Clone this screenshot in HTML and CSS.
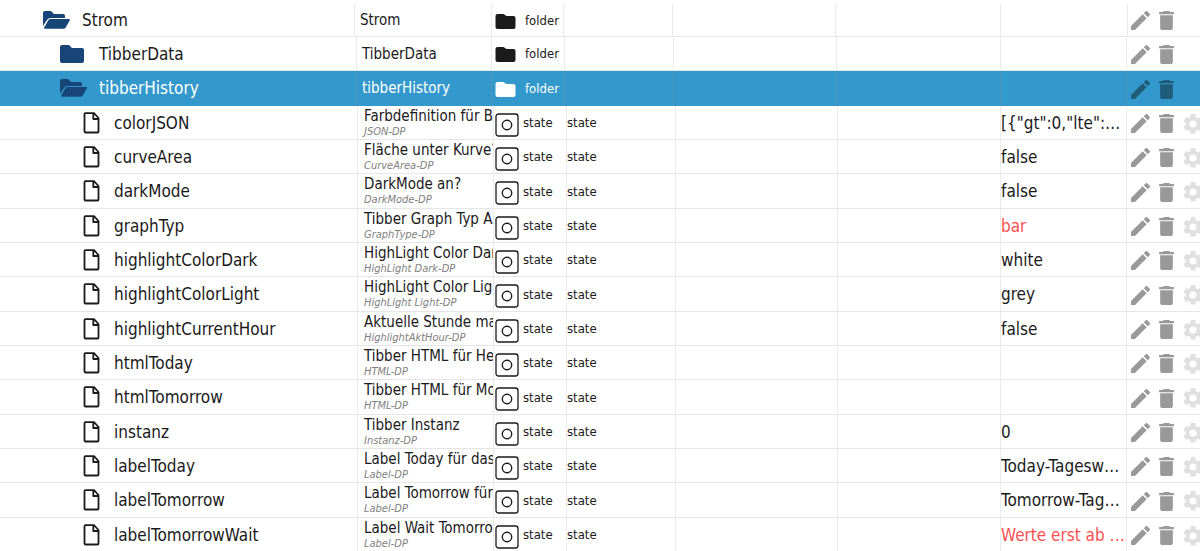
FILE: index.html
```html
<!DOCTYPE html>
<html lang="de">
<head>
<meta charset="utf-8">
<meta name="viewport" content="width=device-width, initial-scale=1">
<title>Objekte</title>
<link rel="stylesheet" href="styles.css">
</head>
<body>
<svg class="sprite" aria-hidden="true">
<symbol id="open" viewBox="0 0 27 20"><path d="M0 16V3q0-2 2-2h6l3 3h9q2 0 2 2v2H8q-3 0-4 2z"/><path d="M8 9h18q1.400 0 .7 1.400l-4 7q-.8 1.300-2.300 1.300H2q-1.500 0-.8-1.300l4-7Q6 9 8 9z"/></symbol>
<symbol id="closed" viewBox="0 0 24 20"><path d="M2 1h7l3 3h10q2 0 2 2v11q0 2-2 2H2q-2 0-2-2V3q0-2 2-2z"/></symbol>
<symbol id="kind" viewBox="0 0 20 16"><path d="M2 0h6l3 2h7q2 0 2 2v9q0 2-2 2H2q-2 0-2-2V2q0-2 2-2z"/></symbol>
<symbol id="file" viewBox="0 0 16 22"><path d="M2 1.200h8.500L15 6v13.500q0 1-1 1H2q-1 0-1-1v-17.300q0-1 1-1zM9.800 1.500V7H15" fill="none" stroke="currentColor" stroke-width="1.800" stroke-linejoin="round"/></symbol>
<symbol id="state" viewBox="0 0 24 24"><rect x="1" y="1" width="22" height="22" rx="2.500" fill="none" stroke="currentColor" stroke-width="1.300"/><circle cx="12" cy="12" r="4.700" fill="none" stroke="currentColor" stroke-width="1.400"/></symbol>
<symbol id="edit" viewBox="3 3 18 18"><path d="M3 17.250V21h3.750L17.810 9.940l-3.750-3.750L3 17.250zM20.710 7.040a1 1 0 0 0 0-1.410l-2.340-2.340a1 1 0 0 0-1.410 0l-1.830 1.830 3.750 3.750 1.830-1.830z"/></symbol>
<symbol id="trash" viewBox="5 3 14 18"><path d="M6 19c0 1.100.9 2 2 2h8c1.100 0 2-.9 2-2V7H6v12zM19 4h-3.500l-1-1h-5l-1 1H5v2h14V4z"/></symbol>
<symbol id="gear" viewBox="2 2 20 20"><path d="M19.140 12.940c.04-.3.060-.61.060-.94s-.02-.64-.07-.94l2.030-1.580c.18-.14.230-.41.120-.61l-1.920-3.320c-.12-.22-.37-.29-.59-.22l-2.390.96c-.5-.38-1.030-.7-1.620-.94l-.36-2.540A.48.48 0 0 0 13.920 2h-3.840c-.24 0-.43.170-.47.410l-.36 2.540c-.59.240-1.130.570-1.620.94l-2.390-.96c-.22-.08-.47 0-.59.220L2.740 8.870c-.12.210-.08.470.12.610l2.030 1.580c-.05.3-.09.630-.09.940s.02.640.07.940l-2.030 1.580c-.18.140-.23.410-.12.610l1.920 3.320c.12.220.37.290.59.220l2.390-.96c.5.380 1.030.7 1.620.94l.36 2.540c.05.240.24.410.48.410h3.840c.24 0 .44-.17.470-.41l.36-2.540c.59-.24 1.130-.56 1.620-.94l2.390.96c.22.080.47 0 .59-.22l1.920-3.320c.12-.22.070-.47-.12-.61l-2.010-1.580zM12 15.600a3.600 3.600 0 1 1 0-7.200 3.600 3.600 0 0 1 0 7.200z"/></symbol>
</svg>
<table class="objects" aria-label="Objekte"><tbody id="rows"></tbody></table>
<script src="rows.js"></script>
</body>
</html>
```
FILE: styles.css
```css
* { box-sizing: border-box; }
body { margin: 0; background: #fff; color: #1a1a1a; font-family: "DejaVu Sans Condensed", "Noto Sans", sans-serif; overflow: hidden; }
.sprite { display: none; }
svg { display: block; flex: none; fill: currentColor; }
.objects, .objects tbody { display: block; width: 100%; }
.row { display: grid; min-height: 34px; border-bottom: 1px solid #e6e6e6; }
.row:nth-child(3n) { min-height: 35px; }
.root { min-height: 37px; padding-top: 4px; grid-template-columns: 1fr 137px 72px 109px 163px 165px 127px 72px; }
.branch { grid-template-columns: 1fr 135px 73px 109px 163px 164px 126px 73px; }
.leaf { grid-template-columns: 1fr 136px 73px 109px 162px 163px 126px 73px; }
.row td { display: flex; align-items: center; min-width: 0; padding: 0; overflow: hidden; white-space: nowrap; border-right: 1px solid #ebebeb; }
.row td.actions { border: 0; gap: 9px; padding: 2px 0 0 4px; }
.root td.actions { padding: 0 0 0 3px; }
.row td.tree { gap: 15px; font-size: 17px; }
.root .tree { padding-left: 43px; padding-bottom: 1px; }
.branch .tree { padding-left: 60px; }
.leaf .tree { padding-left: 83px; }
.row.root .tree, .row.branch .tree { gap: 12px; }
.folder { width: 27px; height: 20px; color: #174577; }
.folder.closed { width: 24px; margin-right: 3px; }
.file { width: 17px; height: 22px; margin-right: -1px; }
.row td.title { display: flex; flex-direction: column; justify-content: center; align-items: flex-start; padding-left: 5px; font-size: 15px; line-height: 18px; }
.leaf td.title { padding-left: 6px; line-height: 17px; }
.desc { color: #808080; font-size: 11px; line-height: 13px; font-style: italic; }
.type, .role { font-size: 13px; }
.type { gap: 9px; }
.kind { width: 21px; height: 16px; margin: 3px 0 0 3px; }
.state { width: 24px; height: 24px; margin: 4px 0 0 1px; }
.leaf .type { gap: 4px; }
.row td.value { display: block; padding-top: 1px; font-size: 17px; line-height: 32px; text-overflow: ellipsis; }
.unconfirmed { color: #ff5050; }
.selected { background: #3399cc; border-color: #3399cc; color: #fff; }
.selected td { border-color: #4c96bb; }
.actions button { flex: none; padding: 0; border: 0; background: none; color: #999; }
.selected .actions button { color: #1f5c7a; }
.actions svg { width: 20px; height: 20px; }
.actions .edit { width: 19px; height: 19px; }
.actions .trash { width: 15px; height: 19px; }
.actions button:disabled { color: #e0e0e0; }
```
FILE: rows.js
```js
const items = [
  ["root", "Strom", "Strom"],
  ["branch", "TibberData", "TibberData"],
  ["branch selected", "tibberHistory", "tibberHistory"],
  ["leaf", "colorJSON", "Farbdefinition für Balken", "JSON-DP", '[{"gt":0,"lte":10,"color":"green"}]'],
  ["leaf", "curveArea", "Fläche unter Kurve?", "CurveArea-DP", "false"],
  ["leaf", "darkMode", "DarkMode an?", "DarkMode-DP", "false"],
  ["leaf", "graphTyp", "Tibber Graph Typ Auswahl", "GraphType-DP", "bar", true],
  ["leaf", "highlightColorDark", "HighLight Color Dark", "HighLight Dark-DP", "white"],
  ["leaf", "highlightColorLight", "HighLight Color Light", "HighLight Light-DP", "grey"],
  ["leaf", "highlightCurrentHour", "Aktuelle Stunde markieren", "HighlightAktHour-DP", "false"],
  ["leaf", "htmlToday", "Tibber HTML für Heute", "HTML-DP", ""],
  ["leaf", "htmlTomorrow", "Tibber HTML für Morgen", "HTML-DP", ""],
  ["leaf", "instanz", "Tibber Instanz", "Instanz-DP", "0"],
  ["leaf", "labelToday", "Label Today für das Diagramm", "Label-DP", "Today-Tageswerte"],
  ["leaf", "labelTomorrow", "Label Tomorrow für Diagramm", "Label-DP", "Tomorrow-Tageswerte"],
  ["leaf", "labelTomorrowWait", "Label Wait Tomorrow", "Label-DP", "Werte erst ab 13 Uhr", true]
];
const icon = (id, cls) => `<svg class="${cls}" aria-hidden="true"><use href="#${id}"/></svg>`;
document.getElementById("rows").innerHTML = items.map(([kind, name, title, desc, value = "", unconfirmed]) => {
  const leaf = kind === "leaf";
  const treeIcon = leaf ? icon("file", "file") : name === "TibberData" ? icon("closed", "folder closed") : icon("open", "folder");
  return `<tr class="row ${kind}">
    <td class="tree">${treeIcon}<span>${name}</span></td>
    <td class="title"><span>${title}</span>${leaf ? `<span class="desc">${desc}</span>` : ""}</td>
    <td class="type">${leaf ? icon("state", "state") : icon("kind", "kind")}<span>${leaf ? "state" : "folder"}</span></td>
    <td class="role">${leaf ? "state" : ""}</td><td></td><td></td>
    <td class="value ${unconfirmed ? "unconfirmed" : ""}">${value}</td>
    <td class="actions"><button aria-label="Bearbeiten">${icon("edit", "edit")}</button><button aria-label="Löschen">${icon("trash", "trash")}</button>${leaf ? `<button aria-label="Einstellungen" disabled>${icon("gear", "gear")}</button>` : ""}</td>
  </tr>`;
}).join("");
```
